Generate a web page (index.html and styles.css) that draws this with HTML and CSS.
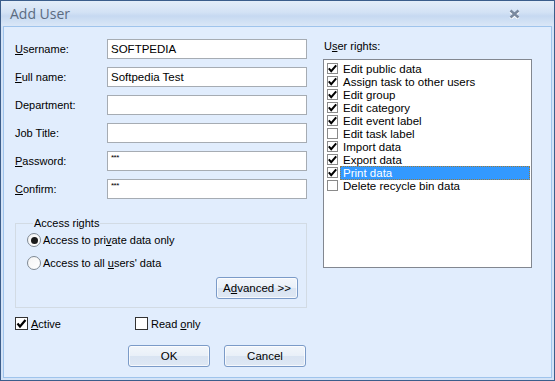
FILE: index.html
```html
<!DOCTYPE html>
<html lang="en">
  <head>
    <meta charset="UTF-8" />
    <meta name="viewport" content="width=device-width, initial-scale=1.0" />
    <title>Add User</title>
    <link rel="stylesheet" href="styles.css">
  </head>
  <body>
    <div class="window">
      <div class="titlebar">
        <span class="title">Add User</span>
        <svg class="close" width="11" height="10" viewBox="0 0 11 10">
          <path d="M1.5 1.5 L9.5 8.5 M9.5 1.5 L1.5 8.5" stroke="#fff" stroke-width="3" transform="translate(0 1)" />
          <path d="M1.5 1.5 L9.5 8.5 M9.5 1.5 L1.5 8.5" stroke="#7a899e" stroke-width="2.4" />
        </svg>
      </div>

      <div class="client">
        <div class="left">
          <div class="fields">
            <div class="field">
              <label><u>U</u>sername:</label>
              <div class="input">SOFTPEDIA</div>
            </div>
            <div class="field">
              <label><u>F</u>ull name:</label>
              <div class="input">Softpedia Test</div>
            </div>
            <div class="field">
              <label>Department:</label>
              <div class="input"></div>
            </div>
            <div class="field">
              <label>Job Title:</label>
              <div class="input"></div>
            </div>
            <div class="field">
              <label><u>P</u>assword:</label>
              <div class="input secret">***</div>
            </div>
            <div class="field">
              <label><u>C</u>onfirm:</label>
              <div class="input secret">***</div>
            </div>
          </div>

          <fieldset class="group">
            <legend>Access rights</legend>
            <div class="radio-row">
              <span class="radio on"></span>
              <span>Access to pri<u>v</u>ate data only</span>
            </div>
            <div class="radio-row">
              <span class="radio"></span>
              <span>Access to all <u>u</u>sers' data</span>
            </div>
            <div class="group-actions">
              <button class="btn">A<u>d</u>vanced &gt;&gt;</button>
            </div>
          </fieldset>

          <div class="checks">
            <div class="check-row active">
              <span class="box on">
                <svg width="13" height="13" viewBox="0 0 13 13"><path d="M2.5 6.5 L5 9.5 L10.5 3" fill="none" stroke="#000" stroke-width="2.2" /></svg>
              </span>
              <span><u>A</u>ctive</span>
            </div>
            <div class="check-row">
              <span class="box"></span>
              <span>Read <u>o</u>nly</span>
            </div>
          </div>

          <div class="buttons">
            <button class="btn">OK</button>
            <button class="btn">Cancel</button>
          </div>
        </div>

        <div class="right">
          <div class="rights-label">U<u>s</u>er rights:</div>
          <div class="rights-list" id="rightsList"></div>
        </div>
      </div>
    </div>

    <script>
      const rights = [
        { name: "Edit public data", on: true },
        { name: "Assign task to other users", on: true },
        { name: "Edit group", on: true },
        { name: "Edit category", on: true },
        { name: "Edit event label", on: true },
        { name: "Edit task label", on: false },
        { name: "Import data", on: true },
        { name: "Export data", on: true },
        { name: "Print data", on: true, selected: true },
        { name: "Delete recycle bin data", on: false },
      ];

      const check =
        '<svg width="11" height="11" viewBox="0 0 11 11"><path d="M1.8 5.4 L4.2 8.2 L9.2 2.3" fill="none" stroke="#000" stroke-width="2" /></svg>';

      const list = document.getElementById("rightsList");
      rights.forEach((r) => {
        const item = document.createElement("div");
        item.className = "right-item" + (r.selected ? " selected" : "");
        item.innerHTML =
          `<span class="mini-box">${r.on ? check : ""}</span>` +
          `<span class="right-text">${r.name}</span>`;
        list.appendChild(item);
      });
    </script>
  </body>
</html>
```

FILE: styles.css
```css
* {
  margin: 0;
  padding: 0;
  box-sizing: border-box;
}

body {
  font-family: "Liberation Sans", Arial, sans-serif;
  font-size: 11px;
  color: #000;
  background: #e1edfd;
}

u {
  text-decoration: underline;
  text-underline-offset: 1px;
}

.window {
  width: 555px;
  height: 381px;
  border: 1px solid #3b5d8b;
  background: #d3e3f7;
  display: flex;
  flex-direction: column;
}

.titlebar {
  height: 25px;
  flex-shrink: 0;
  display: flex;
  align-items: center;
  justify-content: space-between;
  padding: 0 34px 0 9px;
  background: linear-gradient(#e3edf9 0%, #d3e2f5 45%, #c6d9f1 60%, #dae7f7 100%);
}

.title {
  font-family: "Open Sans", "Noto Sans", sans-serif;
  font-size: 14px;
  color: #5b6b81;
  margin-top: -1px;
}

.close {
  margin-top: 1px;
}

.client {
  flex: 1;
  margin: 0 2px 2px;
  border: 1px solid #9fc4ec;
  background: #e1edfd;
  padding: 12px 0 0 11px;
  display: flex;
  gap: 16px;
}

.left {
  width: 292px;
  display: flex;
  flex-direction: column;
}

.fields {
  display: flex;
  flex-direction: column;
  gap: 8px;
}

.field {
  display: flex;
  align-items: center;
  height: 20px;
}

.field label {
  width: 92px;
}

.input {
  width: 200px;
  height: 20px;
  border: 1px solid #a6acb3;
  background: #fff;
  padding: 0 3px;
  line-height: 18px;
  font-size: 11.5px;
  white-space: nowrap;
}

.input.secret {
  font-size: 8px;
  line-height: 12px;
  letter-spacing: -0.5px;
}

.group {
  margin-top: 17px;
  border: 1px solid #d2dbe4;
  padding: 2px 8px 8px 11px;
  min-width: 0;
}

.group legend {
  margin-left: 6px;
  padding: 0 1px;
  line-height: 14px;
}

.radio-row {
  display: flex;
  align-items: center;
  gap: 2px;
  height: 16px;
}

.radio-row + .radio-row {
  margin-top: 7px;
}

.radio {
  width: 14px;
  height: 14px;
  border-radius: 50%;
  border: 1px solid #7f8993;
  background: linear-gradient(135deg, #f4f4f4, #ffffff);
  display: flex;
  align-items: center;
  justify-content: center;
}

.radio.on::after {
  content: "";
  width: 7px;
  height: 7px;
  border-radius: 50%;
  background: #1a1a1a;
}

.group-actions {
  display: flex;
  justify-content: flex-end;
  margin-top: 6px;
}

.btn {
  font-family: "Liberation Sans", Arial, sans-serif;
  font-size: 11.5px;
  color: #000;
  width: 82px;
  height: 22px;
  border: 1px solid #7b9bc8;
  border-radius: 3px;
  background: linear-gradient(#f2f6fb 0%, #e9f0f8 48%, #d9e4f2 52%, #dfe8f4 100%);
  box-shadow: inset 0 0 0 1px rgba(255, 255, 255, 0.7);
}

.checks {
  display: flex;
  margin-top: 9px;
  height: 13px;
}

.check-row {
  display: flex;
  align-items: center;
  gap: 3px;
}

.check-row.active {
  width: 120px;
}

.box {
  width: 13px;
  height: 13px;
  border: 1px solid #333;
  background: #fff;
  display: flex;
  align-items: center;
  justify-content: center;
}

.box svg {
  margin: -1px;
}

.buttons {
  display: flex;
  justify-content: flex-end;
  gap: 14px;
  margin-top: 15px;
  padding-right: 1px;
}

.right {
  display: flex;
  flex-direction: column;
}

.rights-label {
  line-height: 13px;
  margin-top: 1px;
  margin-left: 1px;
  height: 19px;
}

.rights-list {
  width: 209px;
  height: 209px;
  border: 1px solid #828790;
  background: #fff;
  padding: 2px 0 0 3px;
}

.right-item {
  display: flex;
  align-items: center;
  height: 13px;
  font-size: 11.5px;
}

.mini-box {
  width: 11px;
  height: 11px;
  border: 1px solid #8a8a8a;
  background: #fff;
  display: flex;
  align-items: center;
  justify-content: center;
  flex-shrink: 0;
}

.mini-box svg {
  margin: -1px;
}

.right-text {
  margin-left: 2px;
  padding-left: 2px;
  line-height: 12px;
  border: 1px solid transparent;
}

.right-item.selected .right-text {
  flex: 1;
  margin-right: 1px;
  background: #3399ff;
  color: #fff;
  border: 1px dotted #9a7a3c;
}
```
